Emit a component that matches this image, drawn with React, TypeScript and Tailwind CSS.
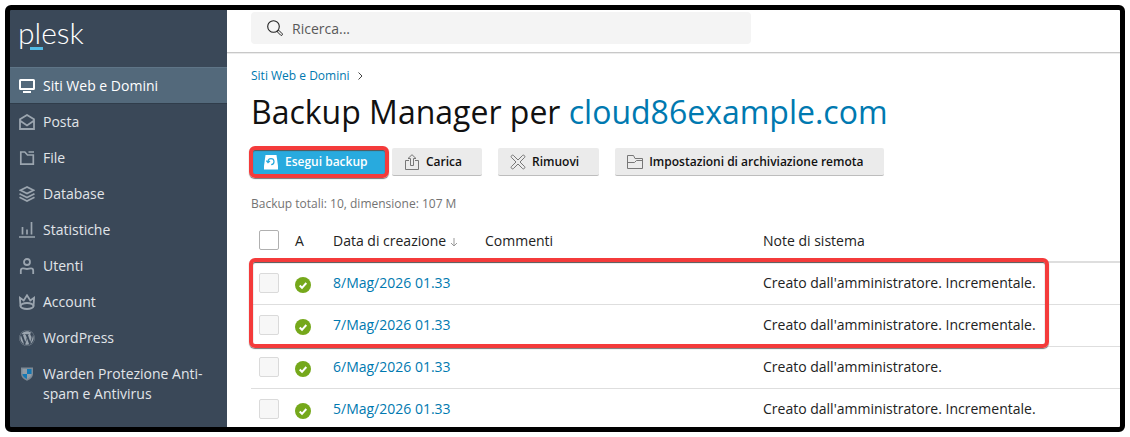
import React from "react";
import { FaWordpress } from "react-icons/fa";

interface NavItem {
  name: string;
  href: string;
  icon: React.ReactNode;
  active?: boolean;
}

interface Backup {
  date: string;
  notes: string;
}

interface IconProps {
  children: React.ReactNode;
  className?: string;
}

function Icon({ children, className = "" }: IconProps) {
  return (
    <svg
      viewBox="0 0 16 16"
      fill="none"
      stroke="currentColor"
      aria-hidden="true"
      className={`size-4 shrink-0 ${className}`}
    >
      {children}
    </svg>
  );
}

const NAV_ITEMS: NavItem[] = [
  {
    name: "Siti Web e Domini",
    href: "#domains",
    active: true,
    icon: (
      <Icon>
        <rect x="1" y="2" width="14" height="9" rx="0.5" strokeWidth="2" />
        <path d="M4 14h8" strokeWidth="2" />
      </Icon>
    ),
  },
  {
    name: "Posta",
    href: "#mail",
    icon: (
      <Icon>
        <path
          d="M1 5.2 8 1l7 4.2V15H1V5.2ZM1.5 7 8 11.5 14.5 7"
          strokeWidth="1.8"
        />
      </Icon>
    ),
  },
  {
    name: "File",
    href: "#files",
    icon: (
      <Icon>
        <path
          d="M9.5 2H15M1.8 14.2V2h4l2.7 3h5.8v9.2H1.8Z"
          strokeWidth="1.7"
        />
      </Icon>
    ),
  },
  {
    name: "Database",
    href: "#databases",
    icon: (
      <Icon>
        <path
          d="M8 1 1.5 4.3 8 7.6l6.5-3.3L8 1ZM.5 7.8 8 11.5l7.500-3.700M.5 11.300 8 15l7.500-3.700"
          strokeWidth="1.8"
        />
      </Icon>
    ),
  },
  {
    name: "Statistiche",
    href: "#stats",
    icon: (
      <Icon>
        <path d="M0 15h16M3.5 12.5V5M8 12.5V7.500M12.500 12.500V0" strokeWidth="1.7" />
      </Icon>
    ),
  },
  {
    name: "Utenti",
    href: "#users",
    icon: (
      <Icon>
        <circle cx="8" cy="4" r="3" strokeWidth="1.8" />
        <path
          d="M1.8 16v-3.500c0-1.400.8-2.200 2.200-2.200 1.400 0 2.400.7 4 .7s2.600-.7 4-.7c1.400 0 2.200.8 2.200 2.200V16"
          strokeWidth="1.8"
        />
      </Icon>
    ),
  },
  {
    name: "Account",
    href: "#account",
    icon: (
      <Icon>
        <path
          d="M1.500 12.500.9 3.800l3.800 2.700L8 1.300l3.300 5.200 3.800-2.700-.6 8.700"
          strokeWidth="1.8"
        />
        <ellipse cx="8" cy="12" rx="6.500" ry="3" strokeWidth="1.8" />
      </Icon>
    ),
  },
  {
    name: "WordPress",
    href: "#wordpress",
    icon: <FaWordpress className="size-4 shrink-0" aria-hidden="true" />,
  },
  {
    name: "Warden Protezione Anti-spam e Antivirus",
    href: "#warden",
    icon: (
      <Icon>
        <path
          d="M2 1.500h12V8c0 3-2.500 5.300-6 6.800C4.500 13.300 2 11 2 8V1.500Z"
          fill="#7d8a96"
          stroke="none"
        />
        <path d="M8 3h4.500v5H8V3Z" fill="#1478b4" stroke="none" />
        <path d="M3.500 8H8v5C5.300 11.800 3.500 10 3.500 8Z" fill="#1478b4" stroke="none" />
        <path d="M3.500 3H8v5H3.500V3Z" fill="#929da7" stroke="none" />
        <path d="M8 8h4.500c0 2-1.800 3.800-4.500 5V8Z" fill="#929da7" stroke="none" />
      </Icon>
    ),
  },
];

const BACKUPS: Backup[] = [
  { date: "8/Mag/2026 01.33", notes: "Creato dall'amministratore. Incrementale." },
  { date: "7/Mag/2026 01.33", notes: "Creato dall'amministratore. Incrementale." },
  { date: "6/Mag/2026 01.33", notes: "Creato dall'amministratore." },
  { date: "5/Mag/2026 01.33", notes: "Creato dall'amministratore. Incrementale." },
];

function Sidebar() {
  return (
    <aside className="w-[217px] shrink-0 bg-[#3a4858]">
      <a
        href="#home"
        className="relative block h-[57px] pt-0.5 pl-2 font-[Lato,sans-serif] text-[30px] leading-10 font-light text-white"
      >
        plesk
        <span className="absolute top-[37px] left-5 h-[3px] w-[13px] bg-[#53bce6]" />
      </a>
      <nav>
        {NAV_ITEMS.map(({ name, href, icon, active }) => (
          <a
            key={href}
            href={href}
            className={
              active
                ? "flex gap-2 border-y border-t-[#5f7587] border-b-[#303d4b] bg-[#53697b] pt-2 pr-4 pb-[7px] pl-[9px] text-sm leading-5 text-white"
                : "flex gap-2 py-2 pr-4 pl-[9px] text-sm leading-5 text-[#e1e5e9]"
            }
          >
            <span className={active ? "pt-0.5" : "pt-0.5 text-[#9ba5af]"}>
              {icon}
            </span>
            {name}
          </a>
        ))}
      </nav>
    </aside>
  );
}

function SearchBar() {
  return (
    <header className="border-b border-[#c8c8c8] px-6 pt-0.5 pb-2 shadow-[0_1px_0_#ececec]">
      <div className="flex h-8 max-w-[500px] items-center gap-[9px] rounded bg-[#f4f4f4] px-4 text-[#222]">
        <Icon>
          <circle cx="6.500" cy="6.500" r="5.800" strokeWidth="1.100" />
          <path d="m10.300 11.800 1.500-1.500 3.500 3.500c.6.900-.6 2.100-1.500 1.500l-3.500-3.500Z" />
        </Icon>
        <input
          type="search"
          aria-label="Ricerca"
          placeholder="Ricerca..."
          className="h-full min-w-0 flex-1 bg-transparent text-sm leading-5 outline-none placeholder:text-[#595959]"
        />
      </div>
    </header>
  );
}

interface ToolButtonProps {
  icon: React.ReactNode;
  children: React.ReactNode;
}

function ToolButton({ icon, children }: ToolButtonProps) {
  return (
    <button
      type="button"
      className="flex h-7 items-center gap-1.5 rounded-xs border-b border-[#bdbdbd] bg-[#ebebeb] pr-5 pl-3 text-xs font-semibold whitespace-nowrap text-[#111]"
    >
      <span className="text-[#777]">{icon}</span>
      {children}
    </button>
  );
}

function Toolbar() {
  return (
    <div className="mt-3.5 flex gap-4">
      <div className="relative -mr-2.5">
        <button
          type="button"
          className="flex h-7 w-[135px] items-center gap-1.5 bg-[#28aade] pl-3 text-xs font-semibold whitespace-nowrap text-white"
        >
          <Icon>
            <path
              d="M2.500 1h11l1.500 11v3.500H1V12L2.500 1Z"
              fill="currentColor"
              stroke="none"
            />
            <path
              d="M5 7.700a3 3 0 1 1 3.200 3M3.300 6.700 5 8.700l2-1.700"
              stroke="#28aade"
              strokeWidth="1.200"
            />
          </Icon>
          Esegui backup
        </button>
        <span className="pointer-events-none absolute -top-0.5 -left-0.5 h-8 w-[140px] rounded-md border-4 border-[#f43b3b] shadow-[0_1px_1px_#777,inset_0_1px_1px_#555]" />
      </div>
      <ToolButton
        icon={
          <Icon>
            <path d="M5 6.500H1.500v9h13v-9H11M6.500 11.500v-7H4L8 .7l4 3.800H9.500v7h-3Z" />
          </Icon>
        }
      >
        Carica
      </ToolButton>
      <ToolButton
        icon={
          <Icon>
            <path d="M1.300 3.300C.5 2.200 2.200.5 3.300 1.300L8 6l4.700-4.700c1.100-.8 2.800.9 2 2L10 8l4.700 4.700c.8 1.100-.9 2.800-2 2L8 10l-4.700 4.700c-1.100.8-2.800-.9-2-2L6 8 1.300 3.300Z" />
          </Icon>
        }
      >
        Rimuovi
      </ToolButton>
      <ToolButton
        icon={
          <Icon>
            <path d="M.5 14.500v-13h6l1.500 3h7.500v10H.5ZM.5 8.500h7l2-2h6" />
          </Icon>
        }
      >
        Impostazioni di archiviazione remota
      </ToolButton>
    </div>
  );
}

function BackupTable() {
  return (
    <div className="relative mt-2">
      <table className="w-full table-fixed border-separate border-spacing-0 text-left text-sm leading-5 text-[#222]">
        <colgroup>
          <col className="w-9" />
          <col className="w-[38px]" />
          <col className="w-[152px]" />
          <col className="w-[278px]" />
          <col />
        </colgroup>
        <thead>
          <tr className="h-[43px] *:border-b-2 *:border-[#dedede] *:px-2 *:font-normal">
            <th className="pb-px">
              <input
                type="checkbox"
                aria-label="Seleziona tutto"
                className="block size-5 appearance-none rounded-xs border border-[#b0b0b0] bg-white"
              />
            </th>
            <th>A</th>
            <th className="whitespace-nowrap">
              Data di creazione
              <svg
                viewBox="0 0 8 10"
                fill="none"
                stroke="#999"
                aria-hidden="true"
                className="ml-1 inline h-2.5 w-2"
              >
                <path d="M4 1v8M1 6l3 3 3-3" />
              </svg>
            </th>
            <th>Commenti</th>
            <th>Note di sistema</th>
          </tr>
        </thead>
        <tbody>
          {BACKUPS.map(({ date, notes }) => (
            <tr
              key={date}
              className="h-[42px] *:border-b *:border-[#dedede] *:px-2 *:pb-0.5"
            >
              <td>
                <input
                  type="checkbox"
                  aria-label={`Seleziona ${date}`}
                  className="block size-5 appearance-none rounded-xs border border-[#dadada] bg-[#f7f7f7]"
                />
              </td>
              <td className="pt-1">
                <Icon className="block">
                  <circle cx="8" cy="8" r="8" fill="#75a81b" stroke="none" />
                  <path d="m4.700 8.500 2.300 2.300 4.300-4.800" stroke="#fff" strokeWidth="2" />
                </Icon>
              </td>
              <td className="whitespace-nowrap">
                <a href="#backup" className="text-[#0079b0]">
                  {date}
                </a>
              </td>
              <td />
              <td className="whitespace-nowrap">{notes}</td>
            </tr>
          ))}
        </tbody>
      </table>
      <div className="pointer-events-none absolute top-[38px] -left-0.5 h-[90px] w-[800px] rounded-md border-4 border-[#f43b3b] shadow-[0_1px_1px_#777,inset_0_1px_1px_#555]" />
    </div>
  );
}

export default function App() {
  return (
    <div className="h-screen bg-white p-[5px] font-['Open_Sans',sans-serif]">
      <div className="flex h-full overflow-hidden rounded-md border-[5px] border-black bg-black">
        <Sidebar />
        <div className="min-w-0 flex-1 bg-white">
          <SearchBar />
          <main className="pt-[15px] pl-6">
            <div className="flex items-center gap-2 text-xs leading-4">
              <a href="#domains" className="text-[#0079b0]">
                Siti Web e Domini
              </a>
              <svg
                viewBox="0 0 5 8"
                fill="none"
                stroke="#444"
                aria-hidden="true"
                className="h-2 w-[5px]"
              >
                <path d="m.5.500 3.500 3.500L.5 7.500" />
              </svg>
            </div>
            <h1 className="mt-1.5 text-[32px] leading-[44px] whitespace-nowrap text-[#111]">
              Backup Manager per{" "}
              <a href="#site" className="text-[#0079b0]">
                cloud86example.com
              </a>
            </h1>
            <Toolbar />
            <p className="mt-5 text-xs leading-4 text-[#737373]">
              Backup totali: 10, dimensione: 107 M
            </p>
            <BackupTable />
          </main>
        </div>
      </div>
    </div>
  );
}
